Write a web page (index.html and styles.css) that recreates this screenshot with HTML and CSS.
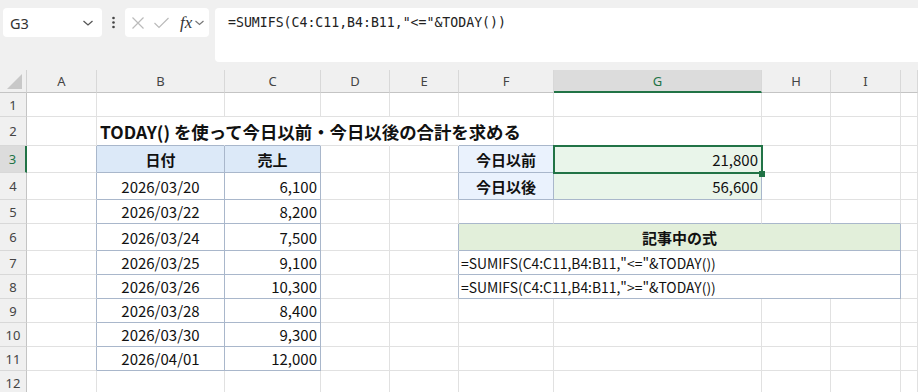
FILE: index.html
```html
<!DOCTYPE html>
<html lang="ja">
<head>
    <meta charset="UTF-8">
    <title>TODAY() SUMIFS</title>
    <link rel="stylesheet" href="styles.css">
</head>
<body>
    <div class="toolbar">
        <div class="name-box">
            <span>G3</span>
            <svg class="chev" width="12" height="8" viewBox="0 0 12 8"><polyline points="1.5,2 6,6 10.5,2" fill="none" stroke="#555" stroke-width="1.3"/></svg>
        </div>
        <svg class="more" width="17" height="29" viewBox="0 0 17 29"><circle cx="8.5" cy="10" r="1.3" fill="#444"/><circle cx="8.5" cy="14.5" r="1.3" fill="#444"/><circle cx="8.5" cy="19" r="1.3" fill="#444"/></svg>
        <div class="fn-box">
            <svg width="14" height="14" viewBox="0 0 14 14"><path d="M1.5 1.5 L12.5 12.5 M12.5 1.5 L1.5 12.5" stroke="#bbb" stroke-width="1.2"/></svg>
            <svg width="17" height="14" viewBox="0 0 17 14"><polyline points="1.5,7 6,11.5 15.5,2" fill="none" stroke="#bbb" stroke-width="1.2"/></svg>
            <span class="fx">fx</span>
            <svg class="chev" width="11" height="8" viewBox="0 0 11 8"><polyline points="1.5,2 5.5,5.5 9.5,2" fill="none" stroke="#777" stroke-width="1.2"/></svg>
        </div>
        <div class="formula-box">=SUMIFS(C4:C11,B4:B11,"&lt;="&amp;TODAY())</div>
    </div>

    <div class="sheet">
        <!-- column headers -->
        <div class="corner"><span></span></div>
        <div class="ch">A</div><div class="ch">B</div><div class="ch">C</div><div class="ch">D</div><div class="ch">E</div>
        <div class="ch">F</div><div class="ch sel-col">G</div><div class="ch">H</div><div class="ch">I</div><div class="ch"></div>

        <!-- row 1 -->
        <div class="rh">1</div>
        <div class="c"></div><div class="c"></div><div class="c"></div><div class="c"></div><div class="c"></div>
        <div class="c"></div><div class="c"></div><div class="c"></div><div class="c"></div><div class="c"></div>

        <!-- row 2 -->
        <div class="rh">2</div>
        <div class="c"></div>
        <div class="c title no-r tb-b">TODAY() を使って今日以前・今日以後の合計を求める</div>
        <div class="c no-r tb-b"></div><div class="c no-r"></div><div class="c no-r"></div>
        <div class="c tb-b"></div><div class="c tb-b"></div><div class="c"></div><div class="c"></div><div class="c"></div>

        <!-- row 3 -->
        <div class="rh sel-row">3</div>
        <div class="c tb-r"></div>
        <div class="c tb hd-blue">日付</div><div class="c tb hd-blue">売上</div>
        <div class="c"></div><div class="c tb-r"></div>
        <div class="c tb lbl">今日以前</div>
        <div class="c tb val sel">21,800</div>
        <div class="c"></div><div class="c"></div><div class="c"></div>

        <!-- row 4 -->
        <div class="rh">4</div>
        <div class="c tb-r"></div>
        <div class="c tb date">2026/03/20</div><div class="c tb num">6,100</div>
        <div class="c"></div><div class="c tb-r"></div>
        <div class="c tb lbl">今日以後</div>
        <div class="c tb val">56,600</div>
        <div class="c"></div><div class="c"></div><div class="c"></div>

        <!-- row 5 -->
        <div class="rh">5</div>
        <div class="c tb-r"></div>
        <div class="c tb date">2026/03/22</div><div class="c tb num">8,200</div>
        <div class="c"></div><div class="c"></div>
        <div class="c tb-b"></div><div class="c tb-b"></div><div class="c tb-b"></div><div class="c tb-b"></div><div class="c"></div>

        <!-- row 6 -->
        <div class="rh">6</div>
        <div class="c tb-r"></div>
        <div class="c tb date">2026/03/24</div><div class="c tb num">7,500</div>
        <div class="c"></div><div class="c tb-r"></div>
        <div class="c tb hd-green span4">記事中の式</div>
        <div class="c"></div>

        <!-- row 7 -->
        <div class="rh">7</div>
        <div class="c tb-r"></div>
        <div class="c tb date">2026/03/25</div><div class="c tb num">9,100</div>
        <div class="c"></div><div class="c tb-r"></div>
        <div class="c tb formula span4">=SUMIFS(C4:C11,B4:B11,"&lt;="&amp;TODAY())</div>
        <div class="c"></div>

        <!-- row 8 -->
        <div class="rh">8</div>
        <div class="c tb-r"></div>
        <div class="c tb date">2026/03/26</div><div class="c tb num">10,300</div>
        <div class="c"></div><div class="c tb-r"></div>
        <div class="c tb formula span4">=SUMIFS(C4:C11,B4:B11,"&gt;="&amp;TODAY())</div>
        <div class="c"></div>

        <!-- row 9 -->
        <div class="rh">9</div>
        <div class="c tb-r"></div>
        <div class="c tb date">2026/03/28</div><div class="c tb num">8,400</div>
        <div class="c"></div><div class="c"></div><div class="c"></div><div class="c"></div><div class="c"></div><div class="c"></div><div class="c"></div>

        <!-- row 10 -->
        <div class="rh">10</div>
        <div class="c tb-r"></div>
        <div class="c tb date">2026/03/30</div><div class="c tb num">9,300</div>
        <div class="c"></div><div class="c"></div><div class="c"></div><div class="c"></div><div class="c"></div><div class="c"></div><div class="c"></div>

        <!-- row 11 -->
        <div class="rh">11</div>
        <div class="c tb-r"></div>
        <div class="c tb date">2026/04/01</div><div class="c tb num">12,000</div>
        <div class="c"></div><div class="c"></div><div class="c"></div><div class="c"></div><div class="c"></div><div class="c"></div><div class="c"></div>

        <!-- row 12 -->
        <div class="rh">12</div>
        <div class="c"></div><div class="c"></div><div class="c"></div><div class="c"></div><div class="c"></div>
        <div class="c"></div><div class="c"></div><div class="c"></div><div class="c"></div><div class="c"></div>
    </div>
</body>
</html>
```

FILE: styles.css
```css
:root {
    --grid-line: #e1e1e1;
    --table-line: #a9b7cb;
    --header-bg: #f0f0f0;
    --excel-green: #217346;
}

* {
    margin: 0;
    padding: 0;
    box-sizing: border-box;
}

body {
    width: 918px;
    height: 392px;
    overflow: hidden;
    background-color: white;
    font-family: "Noto Sans CJK JP", sans-serif;
    color: #111;
}

/* formula bar */
.toolbar {
    display: flex;
    align-items: flex-start;
    height: 70px;
    padding: 8px 0 0 3px;
    background-color: var(--header-bg);
}

.name-box {
    display: flex;
    align-items: center;
    justify-content: space-between;
    width: 99px;
    height: 29px;
    padding: 0 8px 0 7px;
    background-color: white;
    border-radius: 4px;
    font-family: "Noto Sans", sans-serif;
    font-size: 14.5px;
    color: #333;
}

.more {
    margin: 0 3px;
}

.fn-box {
    display: flex;
    align-items: center;
    width: 84px;
    height: 29px;
    margin-right: 6px;
    padding-left: 6px;
    gap: 8px;
    background-color: white;
    border-radius: 4px;
}

.fn-box .fx {
    font-family: "Liberation Serif", serif;
    font-style: italic;
    font-size: 17px;
    color: #333;
    margin-left: 2px;
}

.fn-box .chev {
    margin-left: -6px;
}

.formula-box {
    flex: 1;
    height: 54px;
    padding: 6px 0 0 13px;
    background-color: white;
    border-radius: 4px 0 0 4px;
    font-family: "DejaVu Sans Mono", monospace;
    font-size: 13.2px;
    line-height: 17px;
    color: #222;
}

/* sheet */
.sheet {
    display: grid;
    grid-template-columns: 27px 70px 128px 96px 69px 69px 95px 208px 69px 70px 1fr;
    grid-template-rows: 23px 24px 29px 27px 27px 24px 27px 24px 24px 24px 24px 24px 24px;
}

.corner {
    position: relative;
    background-color: var(--header-bg);
    border-right: 1px solid #d2d2d2;
    border-bottom: 1px solid #c4c4c4;
}

.corner span {
    position: absolute;
    right: 4px;
    bottom: 3px;
    width: 0;
    height: 0;
    border-left: 15px solid transparent;
    border-bottom: 15px solid #c8c8c8;
}

.ch {
    display: flex;
    align-items: center;
    justify-content: center;
    background-color: var(--header-bg);
    border-right: 1px solid #d8d8d8;
    border-bottom: 1px solid #c4c4c4;
    font-family: "Noto Sans", sans-serif;
    font-size: 13px;
    color: #444;
}

.ch.sel-col {
    background-color: #dcdcdc;
    border-bottom: 2px solid var(--excel-green);
    color: var(--excel-green);
}

.rh {
    display: flex;
    align-items: center;
    justify-content: center;
    background-color: var(--header-bg);
    border-right: 1px solid #c4c4c4;
    border-bottom: 1px solid #d8d8d8;
    font-family: "Noto Sans", sans-serif;
    font-size: 13px;
    color: #444;
}

.rh.sel-row {
    background-color: #dcdcdc;
    border-right: 2px solid var(--excel-green);
    color: var(--excel-green);
}

.c {
    position: relative;
    display: flex;
    align-items: center;
    padding: 0 3px;
    border-right: 1px solid var(--grid-line);
    border-bottom: 1px solid var(--grid-line);
    font-size: 15px;
    white-space: nowrap;
}

.c.no-r {
    border-right-color: transparent;
}

.c.tb {
    border-right-color: var(--table-line);
    border-bottom-color: var(--table-line);
}

.c.tb-b {
    border-bottom-color: var(--table-line);
}

.c.tb-r {
    border-right-color: var(--table-line);
}

.span4 {
    grid-column: span 4;
}

.title {
    font-size: 17.4px;
    font-weight: bold;
    overflow: visible;
}

.hd-blue {
    justify-content: center;
    background-color: #dce9f8;
    font-weight: bold;
}

.lbl {
    justify-content: center;
    background-color: #eaf2fd;
    font-weight: bold;
}

.val {
    justify-content: flex-end;
    background-color: #e9f5ea;
}

.hd-green {
    justify-content: center;
    background-color: #e2efda;
    font-weight: bold;
}

.date {
    justify-content: center;
}

.num {
    justify-content: flex-end;
}

.formula {
    padding-left: 2px;
    font-size: 13.9px;
}

/* active cell */
.sel::after {
    content: '';
    position: absolute;
    left: -1px;
    top: -1px;
    right: -2px;
    bottom: -2px;
    border: 2px solid var(--excel-green);
    z-index: 2;
}

.sel::before {
    content: '';
    position: absolute;
    right: -4px;
    bottom: -5px;
    width: 6px;
    height: 6px;
    background-color: var(--excel-green);
    z-index: 3;
}
```
